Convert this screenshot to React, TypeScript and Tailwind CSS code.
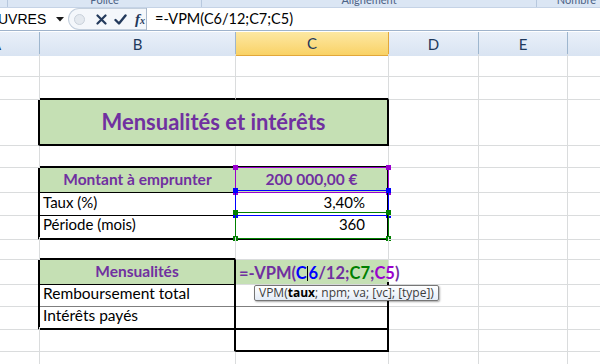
import type { ReactNode } from "react";

const RIGHT: Record<string, string> = {
  g: "border-r border-r-[#dadcdd]",
  k: "border-r border-r-black",
  K: "border-r-2 border-r-black",
  n: "border-r-0",
};

const BOTTOM: Record<string, string> = {
  g: "border-b border-b-[#dadcdd]",
  k: "border-b border-b-black",
  d: "border-b border-b-[#7f7f7f]",
  K: "border-b-2 border-b-black",
  n: "border-b-0",
};

function Cell({
  r = "g",
  b = "g",
  className = "",
  children,
}: {
  r?: string;
  b?: string;
  className?: string;
  children?: ReactNode;
}) {
  return (
    <div className={`relative box-border flex min-w-0 ${RIGHT[r]} ${BOTTOM[b]} ${className}`}>
      {children}
    </div>
  );
}

// colored range box drawn by Excel around a referenced cell while editing
function RangeBox({ color }: { color: "purple" | "blue" | "green" }) {
  const line =
    color === "purple"
      ? "border-[#9a00cf]"
      : color === "blue"
      ? "border-[#0000ff]"
      : "border-[#008000]";
  const dot =
    color === "purple" ? "bg-[#9a00cf]" : color === "blue" ? "bg-[#0000ff]" : "bg-[#008000]";
  return (
    <div className={`pointer-events-none absolute -top-[1px] -left-[1px] -right-[2px] -bottom-[1px] border ${line}`}>
      <div className={`absolute -top-[3px] -left-[3px] h-[5px] w-[5px] ${dot}`} />
      <div className={`absolute -top-[3px] -right-[3px] h-[5px] w-[5px] ${dot}`} />
      <div className={`absolute -bottom-[3px] -left-[3px] h-[5px] w-[5px] ${dot}`} />
      <div className={`absolute -bottom-[3px] -right-[3px] h-[5px] w-[5px] ${dot}`} />
    </div>
  );
}

function Rest() {
  return (
    <>
      <Cell />
      <Cell />
      <Cell r="n" />
    </>
  );
}

const row = "grid grid-cols-[40px_196px_153px_90px_89px_32px]";
const green = "bg-[#c5e0b4]";
const purple = "text-[#7030a0] font-bold";

export default function App() {
  return (
    <div className="h-[364px] w-[600px] overflow-hidden bg-white font-['Lato','Noto_Sans',sans-serif] text-[14.5px] text-black">
      {/* ribbon group labels (only their lower edge shows) */}
      <div className="flex h-[8px] overflow-hidden border-b border-b-[#c5d3e6] bg-[#dbe6f4] text-[11px] leading-[10px] text-[#4d6386]">
        <div className="w-[8px] border-r border-r-[#b7c8de]" />
        <div className="flex w-[194px] justify-center border-r border-r-[#b7c8de]">
          <span className="-mt-[5px]">Police</span>
        </div>
        <div className="flex w-[335px] justify-center border-r border-r-[#b7c8de]">
          <span className="-mt-[5px]">Alignement</span>
        </div>
        <div className="flex flex-1 justify-end pr-[4px]">
          <span className="-mt-[5px]">Nombre</span>
        </div>
      </div>

      {/* formula bar */}
      <div className="flex h-[23px] border-b border-b-[#9fb3cb] bg-white">
        <div className="flex w-[68px] items-center justify-between overflow-hidden pr-[4px]">
          <span className="-ml-[2px] font-['Liberation_Sans',sans-serif] text-[14px] text-black">UVRES</span>
          <svg width="8" height="5" viewBox="0 0 8 5">
            <path d="M0 0h8L4 4.5z" fill="#1a1a1a" />
          </svg>
        </div>
        <div className="flex w-[78px] items-center rounded-l-[12px] border border-r-0 border-[#c3cfdd] bg-[#f4f7fb]">
          <div className="ml-[5px] h-[11px] w-[11px] rounded-full border border-[#c9d1db] bg-[#e4e9ef]" />
          <svg className="ml-[11px]" width="11" height="11" viewBox="0 0 11 11">
            <path d="M1.5 1.5l8 8M9.5 1.5l-8 8" stroke="#233a5c" strokeWidth="2.2" strokeLinecap="round" />
          </svg>
          <svg className="ml-[7px]" width="13" height="11" viewBox="0 0 13 11">
            <path d="M1.5 6l3.5 3.5L11.5 1.5" stroke="#233a5c" strokeWidth="2.4" fill="none" strokeLinecap="round" strokeLinejoin="round" />
          </svg>
          <span className="ml-[8px] font-['Liberation_Serif',serif] text-[15px] font-bold italic leading-none text-[#233a5c]">
            f<span className="text-[10px]">x</span>
          </span>
        </div>
        <div className="flex flex-1 items-center border-l border-l-[#a9b8cb] pl-[8px] text-[14.5px]">
          =-VPM(C6/12;C7;C5)
        </div>
      </div>

      {/* column headers */}
      <div className="mt-[1px] grid h-[22px] grid-cols-[40px_196px_153px_90px_89px_32px] border-b border-b-[#9eb6ce] text-[15px] text-[#1e395b]">
        <div className="flex items-center overflow-hidden border-r border-r-[#9eb6ce] bg-linear-to-b from-[#e9f0f9] to-[#d9e4f2]">
          <span className="-ml-[9px]">A</span>
        </div>
        <div className="flex items-center justify-center border-r border-r-[#9eb6ce] bg-linear-to-b from-[#e9f0f9] to-[#d9e4f2]">B</div>
        <div className="flex items-center justify-center border-r border-r-[#e2a73a] border-b border-b-[#e2a73a] bg-linear-to-b from-[#fde8a2] to-[#f9d265]">C</div>
        <div className="flex items-center justify-center border-r border-r-[#9eb6ce] bg-linear-to-b from-[#e9f0f9] to-[#d9e4f2]">D</div>
        <div className="flex items-center justify-center border-r border-r-[#9eb6ce] bg-linear-to-b from-[#e9f0f9] to-[#d9e4f2]">E</div>
        <div className="bg-linear-to-b from-[#e9f0f9] to-[#d9e4f2]" />
      </div>

      {/* row 1 */}
      <div className={`${row} h-[23px]`}>
        <Cell />
        <Cell />
        <Cell />
        <Rest />
      </div>
      {/* row 2 */}
      <div className={`${row} h-[23px]`}>
        <Cell />
        <Cell b="K" />
        <Cell b="K" />
        <Rest />
      </div>
      {/* row 3 : title */}
      <div className={`${row} h-[46px]`}>
        <Cell r="K" />
        <Cell r="K" b="K" className={`col-span-2 items-center justify-center ${green}`}>
          <span className={`${purple} text-[22px] leading-none`}>Mensualités et intérêts</span>
        </Cell>
        <Rest />
      </div>
      {/* row 4 */}
      <div className={`${row} h-[22px]`}>
        <Cell />
        <Cell b="K" />
        <Cell b="K" />
        <Rest />
      </div>
      {/* row 5 */}
      <div className={`${row} h-[23px]`}>
        <Cell r="K" />
        <Cell r="k" b="k" className={`items-end justify-center pb-[1px] ${green}`}>
          <span className={`${purple} text-[15.5px]`}>Montant à emprunter</span>
        </Cell>
        <Cell r="K" b="k" className={`items-end justify-center pb-[1px] ${green}`}>
          <span className={`${purple} text-[15.5px]`}>200 000,00 €</span>
          <RangeBox color="purple" />
        </Cell>
        <Rest />
      </div>
      {/* row 6 */}
      <div className={`${row} h-[22px]`}>
        <Cell r="K" />
        <Cell r="k" b="k" className="items-end pb-[1px] pl-[3px] text-[15px]">
          Taux (%)
        </Cell>
        <Cell r="K" b="k" className="items-end justify-end pb-[1px] pr-[22px] text-[15px]">
          3,40%
          <RangeBox color="blue" />
        </Cell>
        <Rest />
      </div>
      {/* row 7 */}
      <div className={`${row} h-[24px]`}>
        <Cell r="K" />
        <Cell r="k" b="K" className="items-end pb-[2px] pl-[3px] text-[15px]">
          Période (mois)
        </Cell>
        <Cell r="K" b="K" className="items-end justify-end pb-[2px] pr-[22px] text-[15px]">
          360
          <RangeBox color="green" />
        </Cell>
        <Rest />
      </div>
      {/* row 8 */}
      <div className={`${row} h-[23px]`}>
        <Cell />
        <Cell b="K" />
        <Cell />
        <Rest />
      </div>
      {/* row 9 */}
      <div className={`${row} h-[22px]`}>
        <Cell r="K" />
        <Cell r="K" b="k" className={`items-end justify-center pb-[1px] ${green}`}>
          <span className={`${purple} text-[15.5px]`}>Mensualités</span>
        </Cell>
        <Cell className={`items-end overflow-visible pb-[1px] pl-[3px] ${green}`}>
          <span className={`${purple} whitespace-nowrap text-[16.5px] leading-[20px]`}>
            =-VPM(<span className="text-[#0000ff]">C</span>
            <span className="mx-[0.5px] inline-block h-[15px] w-[1px] translate-y-[2px] bg-black" />
            <span className="text-[#0000ff]">6</span>/12;<span className="text-[#008000]">C7</span>;
            <span className="text-[#9a00cf]">C5</span>)
          </span>
        </Cell>
        <Rest />
      </div>
      {/* row 10 */}
      <div className={`${row} h-[22px]`}>
        <Cell r="K" />
        <Cell r="K" b="d" className="items-end pb-[1px] pl-[3px] text-[15.5px]">
          Remboursement total
        </Cell>
        <Cell r="K" b="d">
          <div className="absolute left-[18px] top-[3px] z-10 flex h-[16px] items-center whitespace-nowrap rounded-[2px] border border-[#767676] bg-linear-to-b from-white to-[#e4ecf7] px-[4px] font-['Open_Sans',sans-serif] text-[12px] text-[#3c3c3c] shadow-[1px_1px_2px_rgba(0,0,0,0.35)]">
            VPM(<b className="font-bold text-black">taux</b>; npm; va; [vc]; [type])
          </div>
        </Cell>
        <Rest />
      </div>
      {/* row 11 */}
      <div className={`${row} h-[23px]`}>
        <Cell r="K" />
        <Cell r="K" b="K" className="items-end pb-[1px] pl-[3px] text-[15.5px]">
          Intérêts payés
        </Cell>
        <Cell r="K" b="K" />
        <Rest />
      </div>
      {/* row 12 */}
      <div className={`${row} h-[25px]`}>
        <Cell />
        <Cell r="K" />
        <Cell r="K" b="K" />
        <Rest />
      </div>
      {/* row 13 */}
      <div className={`${row} h-[24px]`}>
        <Cell />
        <Cell />
        <Cell />
        <Rest />
      </div>
    </div>
  );
}
